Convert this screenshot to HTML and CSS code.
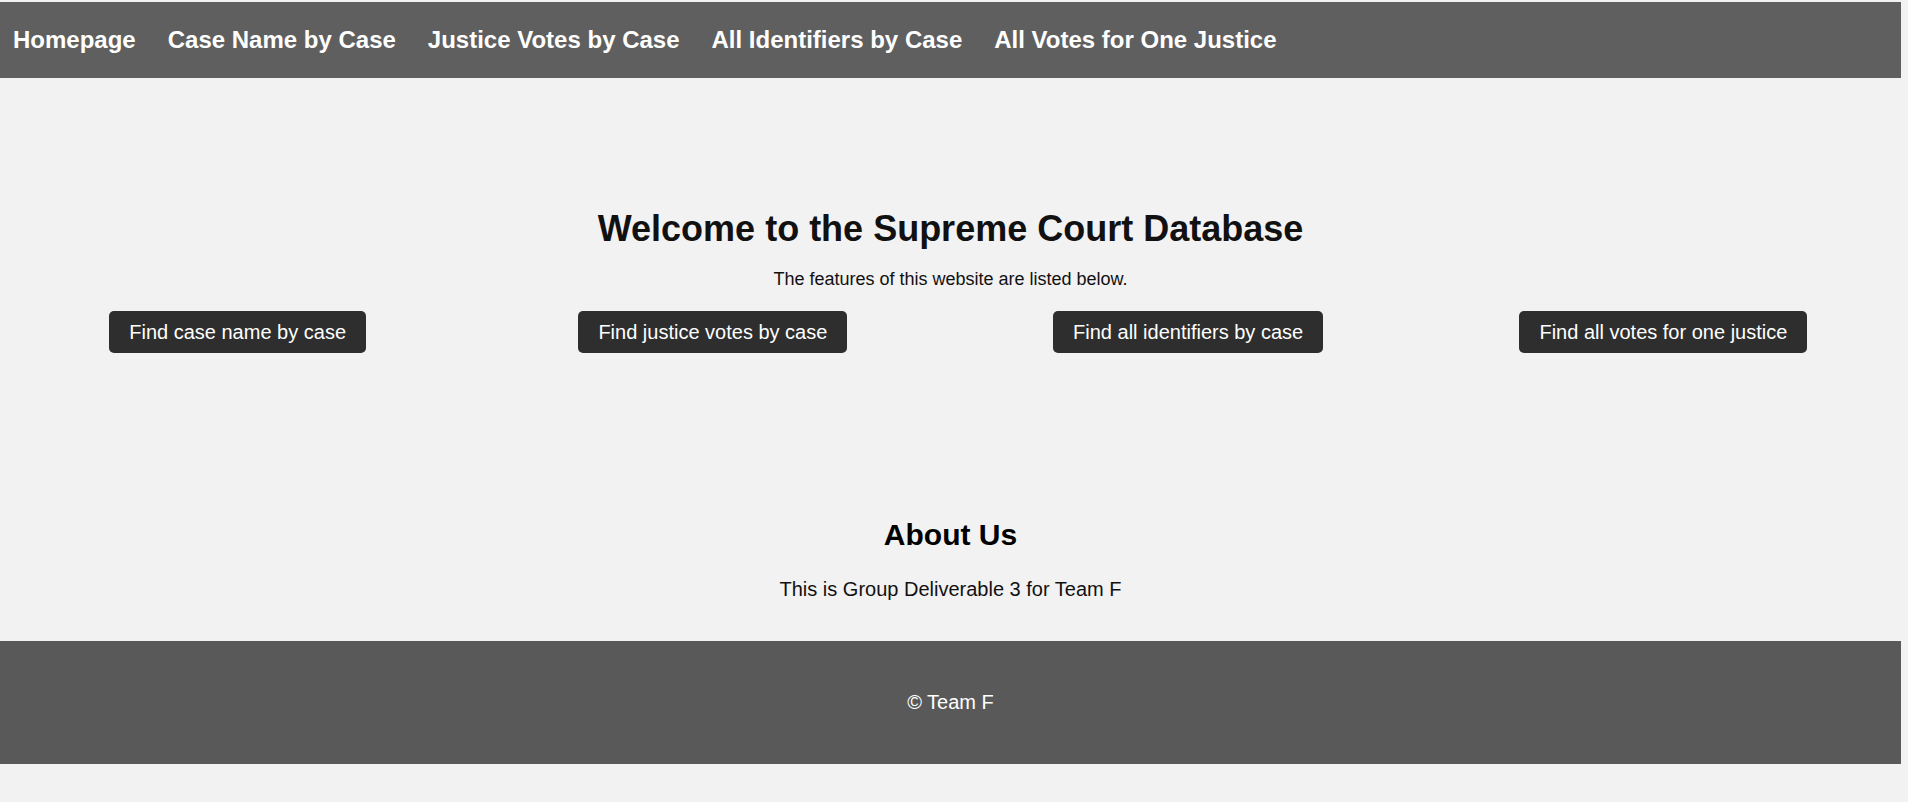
FILE: index.html
```html
<!DOCTYPE html>
<html lang="en">
<head>
<meta charset="utf-8">
<title>Supreme Court Database</title>
<link rel="stylesheet" href="styles.css">
</head>
<body>
<div class="page">
  <nav class="topnav">
    <a href="#">Homepage</a>
    <a href="#">Case Name by Case</a>
    <a href="#">Justice Votes by Case</a>
    <a href="#">All Identifiers by Case</a>
    <a href="#">All Votes for One Justice</a>
  </nav>
  <section class="hero">
    <h1 class="hero-title">Welcome to the Supreme Court Database</h1>
    <p class="hero-sub">The features of this website are listed below.</p>
    <div class="features">
      <div class="feature"><button class="btn">Find case name by case</button></div>
      <div class="feature"><button class="btn">Find justice votes by case</button></div>
      <div class="feature"><button class="btn">Find all identifiers by case</button></div>
      <div class="feature"><button class="btn">Find all votes for one justice</button></div>
    </div>
  </section>
  <section class="about">
    <h2 class="about-title">About Us</h2>
    <p class="about-text">This is Group Deliverable 3 for Team F</p>
  </section>
  <footer class="footer">© Team F</footer>
</div>
</body>
</html>
```
FILE: styles.css
```css
html, body {
  margin: 0;
  padding: 0;
  background: #f2f2f2;
  font-family: "Liberation Sans", Arial, sans-serif;
}
body {
  padding-top: 2px;
}
.page {
  margin-right: 7px;
}
.topnav {
  display: flex;
  align-items: center;
  gap: 32px;
  height: 76px;
  padding-left: 13px;
  background: #5f5f5f;
}
.topnav a {
  color: #ffffff;
  text-decoration: none;
  font-weight: bold;
  font-size: 24px;
  line-height: 28px;
}
.hero {
  padding: 130px 0 0;
  text-align: center;
}
.hero-title {
  margin: 0;
  font-size: 36px;
  line-height: 42px;
  font-weight: bold;
  color: #111111;
}
.hero-sub {
  margin: 18px 0 0;
  font-size: 18px;
  line-height: 22px;
  color: #111111;
}
.features {
  display: grid;
  grid-template-columns: repeat(4, 1fr);
  margin-top: 21px;
}
.feature {
  display: flex;
  justify-content: center;
}
.btn {
  font-family: "Liberation Sans", Arial, sans-serif;
  font-size: 20px;
  line-height: 24px;
  padding: 9px 20px;
  border: 0;
  border-radius: 5px;
  background: #2e2e2e;
  color: #ffffff;
  cursor: pointer;
}
.about {
  padding-top: 165px;
  text-align: center;
}
.about-title {
  margin: 0;
  font-size: 30px;
  line-height: 34px;
  font-weight: bold;
  color: #000000;
}
.about-text {
  margin: 25px 0 0;
  font-size: 20px;
  line-height: 24px;
  color: #111111;
}
.footer {
  margin-top: 40px;
  padding: 50px 0;
  background: #595959;
  color: #ffffff;
  text-align: center;
  font-size: 20px;
  line-height: 23px;
}
```
